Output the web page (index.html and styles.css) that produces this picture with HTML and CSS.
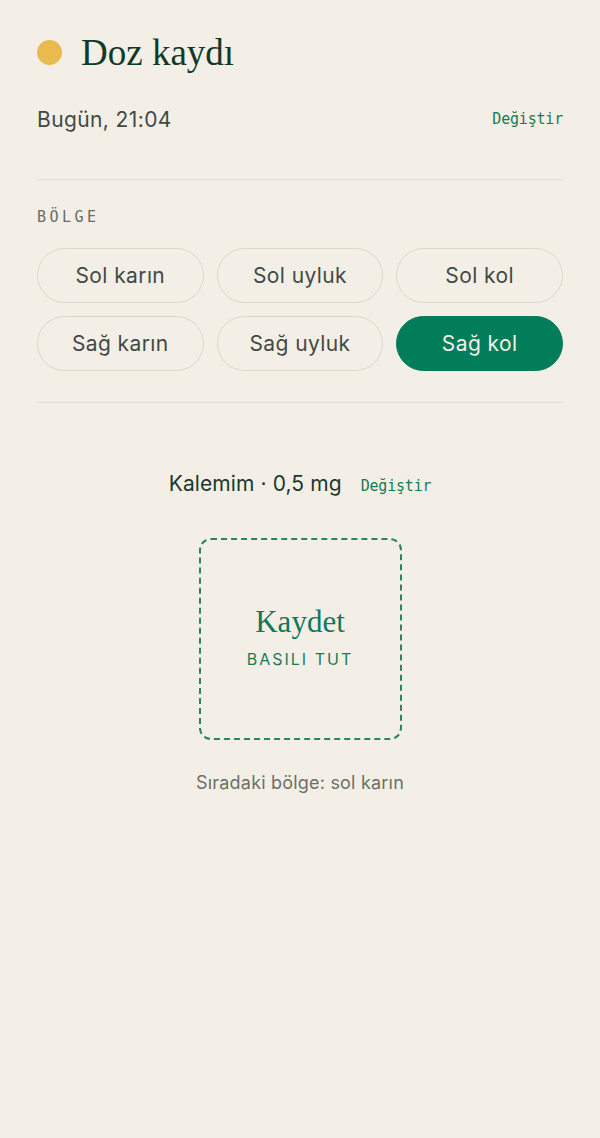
FILE: index.html
```html
<!DOCTYPE html>
<html lang="tr">
<head>
<meta charset="utf-8">
<title>Doz kaydı</title>
<link rel="stylesheet" href="styles.css">
</head>
<body>
<main class="page">
  <header class="title-row">
    <span class="dot"></span>
    <h1 class="title">Doz kaydı</h1>
  </header>

  <div class="when-row">
    <span class="when">Bugün, 21:04</span>
    <a class="link" href="#">Değiştir</a>
  </div>

  <hr class="divider">

  <section class="zones">
    <div class="label">BÖLGE</div>
    <div class="chip-grid">
      <button class="chip">Sol karın</button>
      <button class="chip">Sol uyluk</button>
      <button class="chip">Sol kol</button>
      <button class="chip">Sağ karın</button>
      <button class="chip">Sağ uyluk</button>
      <button class="chip chip-active">Sağ kol</button>
    </div>
  </section>

  <hr class="divider">

  <section class="save">
    <div class="pen-row">
      <span class="pen">Kalemim · 0,5 mg</span>
      <a class="link" href="#">Değiştir</a>
    </div>
    <div class="hold-box">
      <div class="hold-title">Kaydet</div>
      <div class="hold-sub">BASILI TUT</div>
    </div>
    <p class="next">Sıradaki bölge: sol karın</p>
  </section>
</main>
</body>
</html>
```

FILE: styles.css
```css
* { box-sizing: border-box; }
html, body {
  margin: 0;
  padding: 0;
  background: #f4efe6;
}
body {
  font-family: "Inter", "DejaVu Sans", sans-serif;
  color: #3f4a45;
}
.page {
  padding: 28px 37px 40px;
}
.title-row {
  display: flex;
  align-items: center;
  gap: 19px;
  height: 48px;
}
.dot {
  width: 25px;
  height: 25px;
  border-radius: 50%;
  background: #e9bb4e;
  flex: none;
}
.title {
  margin: 0;
  font-family: "Liberation Serif", "DejaVu Serif", serif;
  font-weight: 400;
  font-size: 37px;
  color: #123a28;
  line-height: 1;
}
.when-row {
  display: flex;
  justify-content: space-between;
  align-items: center;
  margin-top: 29px;
  height: 28px;
}
.when {
  font-size: 21px;
  letter-spacing: 0.4px;
  color: #3f4a45;
}
.link {
  font-family: "DejaVu Sans Mono", "Liberation Mono", monospace;
  font-size: 15px;
  letter-spacing: -0.2px;
  color: #157a57;
  text-decoration: none;
}
.divider {
  border: 0;
  height: 1px;
  background: #e1dccd;
  margin: 0;
}
.when-row + .divider { margin-top: 46px; }
.zones { padding-top: 28px; padding-bottom: 31px; }
.label {
  font-family: "DejaVu Sans Mono", "Liberation Mono", monospace;
  font-size: 15px;
  letter-spacing: 3.5px;
  color: #676d69;
  line-height: 18px;
}
.chip-grid {
  margin-top: 22px;
  display: grid;
  grid-template-columns: repeat(3, 1fr);
  column-gap: 13px;
  row-gap: 13px;
}
.chip {
  height: 55px;
  border: 1.5px solid #ddd6c5;
  border-radius: 28px;
  background: transparent;
  font-family: "Inter", "DejaVu Sans", sans-serif;
  font-size: 21px;
  letter-spacing: 0.4px;
  color: #3f4a45;
  padding: 0;
}
.chip-active {
  background: #017d59;
  border-color: #017d59;
  color: #f3efe4;
}
.save {
  display: flex;
  flex-direction: column;
  align-items: center;
  padding-top: 68px;
}
.pen-row {
  display: flex;
  align-items: baseline;
  gap: 19px;
  height: 30px;
}
.pen {
  font-size: 21px;
  letter-spacing: 0.1px;
  color: #183a2c;
}
.hold-box {
  margin-top: 37px;
  width: 203px;
  height: 202px;
  border: 2px dashed #2a8463;
  border-radius: 12px;
  display: flex;
  flex-direction: column;
  align-items: center;
  justify-content: center;
  gap: 12px;
  padding-bottom: 4px;
}
.hold-title {
  font-family: "Liberation Serif", "DejaVu Serif", serif;
  font-size: 31px;
  color: #12785a;
  line-height: 1;
}
.hold-sub {
  font-size: 16px;
  letter-spacing: 2px;
  color: #1a7a59;
}
.next {
  margin: 32px 0 0;
  font-size: 18px;
  letter-spacing: 0.2px;
  color: #6b6f69;
}
```
